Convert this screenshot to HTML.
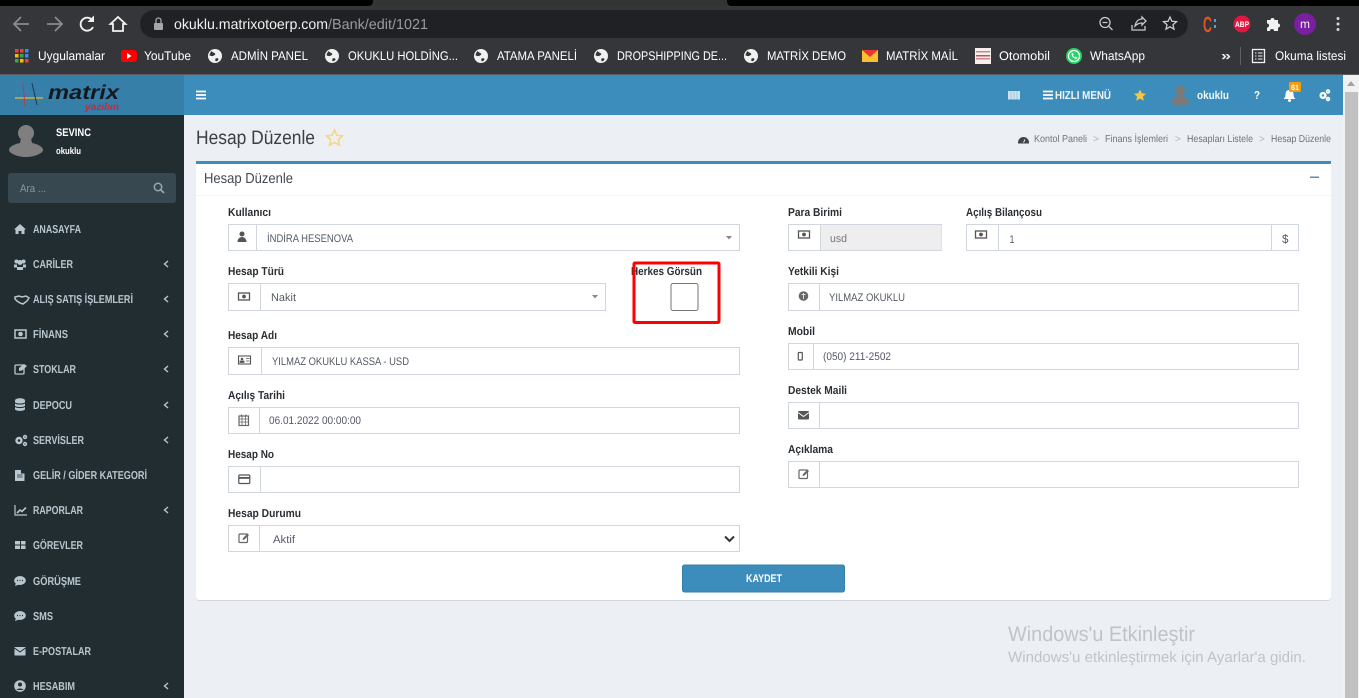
<!DOCTYPE html>
<html lang="tr"><head><meta charset="utf-8"><title>Hesap Düzenle</title>
<style>
html,body{margin:0;padding:0;width:1359px;height:698px;overflow:hidden;background:#ecf0f5}
svg{display:block}
text{font-family:"Liberation Sans",sans-serif;white-space:pre}
.b{fill:#fff;font-size:12.500px}
.m{fill:#b8c7ce;font-size:11.500px;font-weight:bold}
.l{fill:#2a2f33;font-size:11.500px;font-weight:bold}
.v{fill:#555a66;font-size:11px}
.c{fill:#6f7378;font-size:10px}
.box{fill:#fff;stroke:#d2d6de;stroke-width:1}
.dv{stroke:#d2d6de;stroke-width:1}
.ic{fill:#555}
.mi{fill:#b8c7ce}
.ch{fill:none;stroke:#b8c7ce;stroke-width:1.4}
</style></head><body>
<svg width="1359" height="698" viewBox="0 0 1359 698" xmlns="http://www.w3.org/2000/svg" text-rendering="geometricPrecision">
<!-- chrome -->
<rect width="1359" height="75" fill="#35363a"/>
<rect y="0" width="1359" height="6" fill="#333"/>
<path d="M0 0H373V1Q373 6 368 6H0Z" fill="#000"/>
<path d="M727 0H1359V6H732Q727 6 727 1Z" fill="#000"/>
<rect y="74" width="1359" height="1" fill="#5a5b5e"/>
<g fill="none" stroke="#8a8b8e" stroke-width="1.800"><path d="M29 24H15M21 17l-7 7 7 7"/></g>
<g fill="none" stroke="#8a8b8e" stroke-width="1.800"><path d="M47 24H61M55 17l7 7-7 7"/></g>
<path d="M92.500 20.500A6.500 6.500 0 1 0 93 27" fill="none" stroke="#f1f1f1" stroke-width="1.900"/><path d="M94 15.500V22H87.500Z" fill="#f1f1f1"/>
<path d="M118 17l-7.500 7H113V31H123V24H125.500Z" fill="none" stroke="#f1f1f1" stroke-width="1.800"/>
<rect x="140" y="10" width="1048" height="28" rx="14" fill="#202124"/>
<rect x="154" y="23" width="9" height="7" rx="1" fill="#a5a6a9"/><path d="M156 23v-2.500a2.500 2.500 0 0 1 5 0V23" fill="none" stroke="#a5a6a9" stroke-width="1.300"/>
<text x="174" y="29" font-size="14.500" fill="#f1f1f1" textLength="154" lengthAdjust="spacingAndGlyphs">okuklu.matrixotoerp.com</text>
<text x="328" y="29" font-size="14.500" fill="#9a9b9e" textLength="100" lengthAdjust="spacingAndGlyphs">/Bank/edit/1021</text>
<g fill="none" stroke="#c8c9cb" stroke-width="1.300"><circle cx="1105" cy="22.500" r="5"/><path d="M1109 26.500l3.500 3.500M1102.500 22.500h5"/>
<path d="M1132 25v5h13v-4M1135 26c1-5 4-7 7-7v-2l4 4-4 4v-2c-3 0-5 1-7 3Z"/>
<path d="M1170 17l1.900 4.300 4.600.4-3.500 3 1 4.500-4-2.400-4 2.400 1-4.500-3.500-3 4.600-.4Z"/></g>
<text x="1203" y="32" font-size="22" font-weight="bold" fill="#e8501f" textLength="9" lengthAdjust="spacingAndGlyphs">C</text>
<rect x="1214" y="19" width="2" height="3" fill="#4aa3df"/><rect x="1214" y="25" width="2" height="3" fill="#4aa3df"/>
<circle cx="1242" cy="24" r="8.500" fill="#e2173f"/><text x="1235" y="27" font-size="8" font-weight="bold" fill="#fff" textLength="14" lengthAdjust="spacingAndGlyphs">ABP</text>
<path d="M1267 20h3.500a2 2 0 0 1 4 0h3.500v3.500a2 2 0 0 1 0 4V31h-4a2 2 0 0 0-4 0h-3v-3.500a2 2 0 0 0 0-4Z" fill="#f1f1f1"/>
<circle cx="1305" cy="24" r="11" fill="#7b1fa2"/><text x="1300" y="28" font-size="12" fill="#f1f1f1" textLength="10" lengthAdjust="spacingAndGlyphs">m</text>
<g fill="#d8d8da"><circle cx="1338" cy="18.500" r="1.500"/><circle cx="1338" cy="24" r="1.500"/><circle cx="1338" cy="29.500" r="1.500"/></g>
<!-- bookmarks -->
<g><rect x="15" y="49" width="3.500" height="3.500" fill="#ea4335"/><rect x="20" y="49" width="3.500" height="3.500" fill="#ea4335"/><rect x="25" y="49" width="3.500" height="3.500" fill="#4285f4"/><rect x="15" y="54" width="3.500" height="3.500" fill="#fbbc05"/><rect x="20" y="54" width="3.500" height="3.500" fill="#34a853"/><rect x="25" y="54" width="3.500" height="3.500" fill="#4285f4"/><rect x="15" y="59" width="3.500" height="3.500" fill="#34a853"/><rect x="20" y="59" width="3.500" height="3.500" fill="#fbbc05"/><rect x="25" y="59" width="3.500" height="3.500" fill="#ea4335"/></g>
<text class="b" x="38" y="60" textLength="67" lengthAdjust="spacingAndGlyphs">Uygulamalar</text>
<rect x="121" y="50" width="16" height="12" rx="3" fill="#f00"/><path d="M127 53v6l4.500-3Z" fill="#fff"/>
<text class="b" x="144" y="60" textLength="47" lengthAdjust="spacingAndGlyphs">YouTube</text>
<g id="glb"><circle cx="215" cy="56" r="7" fill="#f1f1f1"/><path d="M211.500 51c1 1.500 2.500 1.500 3.500 2.500s-1 2-2 2.500-2.500-.5-3.500-.5c.3-1.800 1-3.300 2-4.500ZM215.500 58.500c1.500-.8 3-.2 3 .8s-1.500 2-2.500 2-.7-2.200-.5-2.800Z" fill="#35363a"/></g>
<text class="b" x="231" y="60" textLength="77" lengthAdjust="spacingAndGlyphs">ADMİN PANEL</text>
<use href="#glb" x="117"/><text class="b" x="348" y="60" textLength="110" lengthAdjust="spacingAndGlyphs">OKUKLU HOLDİNG...</text>
<use href="#glb" x="266"/><text class="b" x="497" y="60" textLength="80" lengthAdjust="spacingAndGlyphs">ATAMA PANELİ</text>
<use href="#glb" x="386"/><text class="b" x="617" y="60" textLength="110" lengthAdjust="spacingAndGlyphs">DROPSHIPPING DE...</text>
<use href="#glb" x="536"/><text class="b" x="767" y="60" textLength="79" lengthAdjust="spacingAndGlyphs">MATRİX DEMO</text>
<path d="M862 50h16v12h-16Z" fill="#fbc02d"/><path d="M862 50l8 7 8-7Z" fill="#e53935"/>
<text class="b" x="886" y="60" textLength="72" lengthAdjust="spacingAndGlyphs">MATRİX MAİL</text>
<rect x="975" y="48" width="16" height="16" fill="#f5f0ee"/><rect x="976" y="51" width="14" height="1.500" fill="#c88"/><rect x="976" y="55" width="14" height="1.500" fill="#b55"/><rect x="976" y="58" width="14" height="1.500" fill="#c88"/>
<text class="b" x="999" y="60" textLength="51" lengthAdjust="spacingAndGlyphs">Otomobil</text>
<circle cx="1074" cy="56" r="8" fill="#25d366"/><circle cx="1074" cy="56" r="5.500" fill="none" stroke="#fff" stroke-width="1.200"/><path d="M1071.500 53.500c0 3 2 5 5 5.500l1-1.500-2-1-.8.7-1.700-1.700.7-.8-1-2Z" fill="#fff"/>
<text class="b" x="1090" y="60" textLength="55" lengthAdjust="spacingAndGlyphs">WhatsApp</text>
<text x="1221" y="60" font-size="13" font-weight="bold" fill="#e8e8e8" textLength="10" lengthAdjust="spacingAndGlyphs">»</text>
<rect x="1240" y="47" width="1" height="18" fill="#5f6063"/>
<rect x="1252.500" y="49.500" width="12" height="13" fill="none" stroke="#f1f1f1" stroke-width="1.300"/><path d="M1255 53h1.500M1258 53h4.500M1255 56h1.500M1258 56h4.500M1255 59h1.500M1258 59h4.500" stroke="#f1f1f1"/>
<text class="b" x="1275" y="60" textLength="71" lengthAdjust="spacingAndGlyphs">Okuma listesi</text>

<!-- header -->
<rect y="75" width="1343" height="40" fill="#3c8dbc"/>
<rect y="75" width="184" height="40" fill="#367fa9"/>
<!-- logo -->
<path d="M16 92H43" stroke="#3b7fc0" stroke-width="1.200"/><path d="M15 98H43" stroke="#c9b24a" stroke-width="1.500"/><path d="M23 84L25 106" stroke="#c23a3a" stroke-width="1"/><path d="M32 83L37 105" stroke="#1d3a55" stroke-width="1"/>
<text x="48" y="99" font-size="20" font-weight="bold" font-style="italic" fill="#14191f" textLength="71" lengthAdjust="spacingAndGlyphs">matrix</text>
<text x="85" y="110" font-size="10" font-weight="bold" font-style="italic" fill="#c8283a" textLength="34" lengthAdjust="spacingAndGlyphs">yazılım</text>
<path d="M196 91.500h10M196 95h10M196 98.500h10" stroke="#fff" stroke-width="1.700"/>
<g fill="#cfe3f0"><rect x="1008" y="91" width="12" height="8.500"/></g><path d="M1011 91v8.500M1014 91v8.500M1017 91v8.500" stroke="#8dbcd9" stroke-width=".7"/>
<path d="M1043 91.500h10M1043 95h10M1043 98.500h10" stroke="#fff" stroke-width="1.700"/>
<text x="1055" y="99" font-size="11.500" font-weight="bold" fill="#f2f6f9" textLength="56" lengthAdjust="spacingAndGlyphs">HIZLI MENÜ</text>
<path d="M1140 89.500l1.800 3.800 4.200.5-3.100 2.800.9 4.100-3.800-2.100-3.800 2.100.9-4.100-3.100-2.800 4.200-.5Z" fill="#f6c544"/>
<circle cx="1180" cy="90.500" r="5" fill="#7a7a7a"/><path d="M1177 94h6l1 3c3 1 5 3 5 5 0 2-4 3.500-9 3.500s-9-1.500-9-3.500c0-2 2-4 5-5Z" fill="#7a7a7a"/>
<text x="1197" y="99" font-size="11.500" font-weight="bold" fill="#f2f6f9" textLength="32" lengthAdjust="spacingAndGlyphs">okuklu</text>
<text x="1254" y="99" font-size="11.500" font-weight="bold" fill="#fff" textLength="6" lengthAdjust="spacingAndGlyphs">?</text>
<path d="M1289.500 90c3 0 4 2 4 4.500 0 2.500 1 3.500 2 4.500h-12c1-1 2-2 2-4.500 0-2.500 1-4.500 4-4.500Z" fill="#fff"/><circle cx="1289.500" cy="100.500" r="1.500" fill="#fff"/>
<rect x="1289" y="82" width="12" height="10" rx="1.500" fill="#f39c12"/><text x="1291" y="90" font-size="7.500" font-weight="bold" fill="#fff" textLength="8" lengthAdjust="spacingAndGlyphs">61</text>
<g id="gears" fill="none" stroke="#fff"><circle cx="1323" cy="95.500" r="2.400" stroke-width="2.400"/><circle cx="1328" cy="91.500" r="1.400" stroke-width="1.700"/><circle cx="1328" cy="99" r="1.400" stroke-width="1.700"/></g>
<!-- scrollbar -->
<rect x="1343" y="75" width="16" height="623" fill="#f1f1f1"/>
<path d="M1351 81l-4 5h8Z" fill="#a3a3a3"/>
<rect x="1345" y="92" width="13" height="606" fill="#c1c1c1"/>

<!-- sidebar -->
<rect y="115" width="184" height="583" fill="#222d32"/>
<circle cx="26" cy="133" r="8" fill="#7f7f7f"/><path d="M21 138h10l1 5c6 1 11 4 11 7 0 3-8 7-17 7s-17-4-17-7c0-3 5-6 11-7Z" fill="#7f7f7f"/>
<text x="56" y="136" font-size="11" font-weight="bold" fill="#fff" textLength="35" lengthAdjust="spacingAndGlyphs">SEVINC</text>
<text x="56" y="154" font-size="9.500" font-weight="bold" fill="#fff" textLength="25" lengthAdjust="spacingAndGlyphs">okuklu</text>
<rect x="8" y="173" width="168" height="30" rx="3" fill="#374850"/>
<text x="20" y="192" font-size="11" fill="#8a9aa2" textLength="26" lengthAdjust="spacingAndGlyphs">Ara ...</text>
<circle cx="158" cy="187" r="3.700" fill="none" stroke="#99a7ae" stroke-width="1.500"/><path d="M161 190l3 3" stroke="#99a7ae" stroke-width="1.800"/>

<text class="m" x="33" y="233" textLength="48" lengthAdjust="spacingAndGlyphs">ANASAYFA</text>
<path class="mi" d="M20 224l6 5.500h-1.500V234h-3v-3h-3v3h-3v-4.500H14Z"/>
<text class="m" x="33" y="268" textLength="40" lengthAdjust="spacingAndGlyphs">CARİLER</text>
<circle cx="16.500" cy="261.500" r="2" class="mi"/><circle cx="23.500" cy="261.500" r="2" class="mi"/><circle cx="20" cy="262.500" r="2.500" class="mi"/><path class="mi" d="M14 264.500h3v2.500h6v-2.500h3v3h-3v2.500h-6v-2.500h-3Z"/>
<path class="ch" d="M168 261l-3.500 3 3.500 3"/>
<text class="m" x="33" y="303" textLength="100" lengthAdjust="spacingAndGlyphs">ALIŞ SATIŞ İŞLEMLERİ</text>
<path d="M15 297l4-1 3 1 4-1 3 2-2 3-4 3-3-1-3-2-2-2Z" fill="none" stroke="#b8c7ce" stroke-width="1.500"/>
<path class="ch" d="M168 296l-3.500 3 3.500 3"/>
<text class="m" x="33" y="338" textLength="35" lengthAdjust="spacingAndGlyphs">FİNANS</text>
<rect x="15" y="330" width="11" height="8" fill="none" stroke="#b8c7ce" stroke-width="1.500"/><circle cx="20.500" cy="334" r="2.300" class="mi"/>
<path class="ch" d="M168 331l-3.500 3 3.500 3"/>
<text class="m" x="33" y="373" textLength="43" lengthAdjust="spacingAndGlyphs">STOKLAR</text>
<rect x="15" y="365" width="9" height="9" rx="1" fill="none" stroke="#b8c7ce" stroke-width="1.300"/><path class="mi" d="M19 368l5-4 3 2-5 4.500-3 .5Z"/>
<path class="ch" d="M168 366l-3.500 3 3.500 3"/>
<text class="m" x="33" y="409" textLength="39" lengthAdjust="spacingAndGlyphs">DEPOCU</text>
<path class="mi" d="M15 400.500c0-3 10-3 10 0v1.500c0 2-10 2-10 0Zm0 3c2 1.500 8 1.500 10 0v2c0 2-10 2-10 0Zm0 3.500c2 1.500 8 1.500 10 0v2c0 2.500-10 2.500-10 0Z"/>
<path class="ch" d="M168 402l-3.500 3 3.500 3"/>
<text class="m" x="33" y="444" textLength="51" lengthAdjust="spacingAndGlyphs">SERVİSLER</text>
<g fill="none" stroke="#b8c7ce"><circle cx="19" cy="440.500" r="2.500" stroke-width="2.400"/><circle cx="25" cy="437" r="1.400" stroke-width="1.600"/><circle cx="25" cy="444" r="1.400" stroke-width="1.600"/></g>
<path class="ch" d="M168 437l-3.500 3 3.500 3"/>
<text class="m" x="33" y="479" textLength="114" lengthAdjust="spacingAndGlyphs">GELİR / GİDER KATEGORİ</text>
<path class="mi" d="M15 470h6v3.500h3.500V481H15Z"/><path d="M17 475h5.500M17 477h5.500" stroke="#222d32" stroke-width=".8"/>
<text class="m" x="33" y="514" textLength="50" lengthAdjust="spacingAndGlyphs">RAPORLAR</text>
<path d="M15 505v10h12" fill="none" stroke="#b8c7ce" stroke-width="1.200"/><path d="M17 513l3-3 2 1.500 4-4" fill="none" stroke="#b8c7ce" stroke-width="1.600"/>
<path class="ch" d="M168 507l-3.500 3 3.500 3"/>
<text class="m" x="33" y="549" textLength="50" lengthAdjust="spacingAndGlyphs">GÖREVLER</text>
<path class="mi" d="M15 541h5v3.500h-5Zm6 0h4.500v3.500H21Zm-6 4.500h5v3.500h-5Zm6 0h4.500v3.500H21Z"/>
<text class="m" x="33" y="585" textLength="48" lengthAdjust="spacingAndGlyphs">GÖRÜŞME</text>
<g id="cht"><ellipse cx="20" cy="580.500" rx="5.800" ry="4.500" class="mi"/><path class="mi" d="M16 583l-1 3 4-1.500Z"/><path d="M17 580.500h1M19.500 580.500h1M22 580.500h1" stroke="#222d32" stroke-width="1.200"/></g>
<text class="m" x="33" y="620" textLength="20" lengthAdjust="spacingAndGlyphs">SMS</text>
<use href="#cht" y="35"/>
<text class="m" x="33" y="655" textLength="58" lengthAdjust="spacingAndGlyphs">E-POSTALAR</text>
<rect x="14.500" y="647" width="11" height="8.500" class="mi"/><path d="M14.500 648l5.500 4 5.500-4" fill="none" stroke="#222d32"/>
<text class="m" x="33" y="690" textLength="42" lengthAdjust="spacingAndGlyphs">HESABIM</text>
<circle cx="20" cy="686" r="5.800" class="mi"/><circle cx="20" cy="684.500" r="2" fill="#222d32"/><path d="M16.500 690c1-2 6-2 7 0Z" fill="#222d32"/>
<path class="ch" d="M168 683l-3.500 3 3.500 3"/>

<!-- page title -->
<text x="196" y="144" font-size="19.500" fill="#3a3f44" textLength="119" lengthAdjust="spacingAndGlyphs">Hesap Düzenle</text>
<path d="M334.500 130l2.400 5.300 5.600.6-4.200 3.800 1.200 5.600-5-2.900-5 2.900 1.200-5.600-4.200-3.800 5.600-.6Z" fill="none" stroke="#f5d67e" stroke-width="1.500"/>
<path d="M1018 142.500a5.500 5.500 0 0 1 11 0v1h-11Z" fill="#444"/><path d="M1023.500 142.500l1.500-3" stroke="#ecf0f5"/>
<text class="c" x="1034" y="142" textLength="53" lengthAdjust="spacingAndGlyphs">Kontol Paneli</text>
<text class="c" x="1093" y="142" style="fill:#b0b3b6" textLength="5">&gt;</text>
<text class="c" x="1105" y="142" textLength="63" lengthAdjust="spacingAndGlyphs">Finans İşlemleri</text>
<text class="c" x="1175" y="142" style="fill:#b0b3b6" textLength="5">&gt;</text>
<text class="c" x="1187" y="142" textLength="66" lengthAdjust="spacingAndGlyphs">Hesapları Listele</text>
<text class="c" x="1259" y="142" style="fill:#b0b3b6" textLength="5">&gt;</text>
<text class="c" x="1271" y="142" textLength="60" lengthAdjust="spacingAndGlyphs">Hesap Düzenle</text>

<!-- card -->
<rect x="196" y="162" width="1135" height="439" rx="3" fill="#d2d6de"/>
<rect x="196" y="161" width="1135" height="439" rx="3" fill="#fff"/>
<path d="M196 164q0-3 3-3H1328q3 0 3 3" fill="#3c8dbc" /><rect x="196" y="161" width="1135" height="2" fill="#3c8dbc"/>
<rect x="196" y="195" width="1135" height="1" fill="#f4f4f4"/>
<text x="204" y="183" font-size="14.500" fill="#444a50" textLength="89" lengthAdjust="spacingAndGlyphs">Hesap Düzenle</text>
<rect x="1310" y="176.500" width="9" height="1.500" fill="#5a8fb5"/>

<!-- left column -->
<text class="l" x="228" y="216" textLength="43" lengthAdjust="spacingAndGlyphs">Kullanıcı</text>
<rect class="box" x="228.500" y="224.500" width="511" height="26"/><path class="dv" d="M256.500 225v25"/>
<circle cx="242" cy="234" r="2.500" class="ic"/><path class="ic" d="M237.500 242c0-3 2-5 4.500-5s4.500 2 4.500 5Z"/>
<text class="v" x="267" y="242" textLength="86" lengthAdjust="spacingAndGlyphs">İNDİRA HESENOVA</text>
<path d="M726 236h6l-3 3.500Z" fill="#888"/>

<text class="l" x="228" y="275" textLength="56" lengthAdjust="spacingAndGlyphs">Hesap Türü</text>
<rect class="box" x="228.500" y="283.500" width="377" height="27"/><path class="dv" d="M260.500 284v26"/>
<g id="mn"><rect x="238.500" y="293" width="11" height="7" fill="none" stroke="#555" stroke-width="1.300"/><circle cx="244" cy="296.500" r="1.900" class="ic"/></g>
<text class="v" x="271" y="301" textLength="25" lengthAdjust="spacingAndGlyphs">Nakit</text>
<path d="M592 295h6l-3 3.500Z" fill="#888"/>

<text class="l" x="631" y="275" textLength="71" lengthAdjust="spacingAndGlyphs">Herkes Görsün</text>
<rect x="671" y="283.500" width="27" height="27" rx="2" fill="#fff" stroke="#767676"/>
<rect x="634" y="263" width="85" height="59.500" rx="1" fill="none" stroke="#f00" stroke-width="3"/>

<text class="l" x="228" y="339" textLength="49" lengthAdjust="spacingAndGlyphs">Hesap Adı</text>
<rect class="box" x="228.500" y="347.500" width="511" height="27"/><path class="dv" d="M261.500 348v26"/>
<rect x="238.500" y="356" width="12" height="8" fill="none" stroke="#555" stroke-width="1.100"/><circle cx="242" cy="359" r="1.300" class="ic"/><path d="M240 362.500h4v-1.500h-4ZM246 358.500h3.500M246 361h3.500" stroke="#555" stroke-width=".8" fill="#555"/>
<text class="v" x="272" y="365" textLength="137" lengthAdjust="spacingAndGlyphs">YILMAZ OKUKLU KASSA - USD</text>

<text class="l" x="228" y="399" textLength="57" lengthAdjust="spacingAndGlyphs">Açılış Tarihi</text>
<rect class="box" x="228.500" y="407.500" width="511" height="26"/><path class="dv" d="M259.500 408v25"/>
<rect x="239" y="416" width="9.500" height="9.500" fill="none" stroke="#666" stroke-width="1.200"/><path d="M239 419h9.500M242 416v9.500M245.500 416v9.500M239 422h9.500" stroke="#666" stroke-width=".8"/><path d="M241.500 414.500v2M246 414.500v2" stroke="#666" stroke-width="1.200"/>
<text class="v" x="269" y="424" textLength="92" lengthAdjust="spacingAndGlyphs">06.01.2022 00:00:00</text>

<text class="l" x="228" y="458" textLength="46" lengthAdjust="spacingAndGlyphs">Hesap No</text>
<rect class="box" x="228.500" y="466.500" width="511" height="26"/><path class="dv" d="M260.500 467v25"/>
<rect x="238.800" y="475" width="11" height="8.500" rx="1" fill="none" stroke="#555" stroke-width="1.200"/><rect x="239" y="477" width="10.500" height="1.800" fill="#555"/>

<text class="l" x="228" y="517" textLength="73" lengthAdjust="spacingAndGlyphs">Hesap Durumu</text>
<rect class="box" x="228.500" y="525.500" width="511" height="26"/><path class="dv" d="M259.500 526v25"/>
<rect x="239" y="534" width="8.500" height="8.500" rx="1" fill="none" stroke="#666" stroke-width="1.200"/><path d="M243 538l4.500-4.500 1.500 1.500-4.500 4.500-2 .5Z" fill="#666"/>
<text class="v" x="273" y="543" textLength="22" lengthAdjust="spacingAndGlyphs">Aktif</text>
<path d="M725 536.500l4.500 4.500 4.500-4.500" fill="none" stroke="#333" stroke-width="2"/>

<rect x="682.500" y="565" width="162" height="27" rx="2" fill="#3c8dbc" stroke="#367fa9"/>
<text x="746" y="582" font-size="11" font-weight="bold" fill="#fff" textLength="36" lengthAdjust="spacingAndGlyphs">KAYDET</text>

<!-- right column -->
<text class="l" x="788" y="216" textLength="54" lengthAdjust="spacingAndGlyphs">Para Birimi</text>
<rect class="box" x="788.500" y="224.500" width="153" height="26"/><rect x="820.500" y="225" width="121" height="25" fill="#eee"/><path class="dv" d="M820.500 225v25"/>
<use href="#mn" x="560" y="-62"/>
<text x="830" y="242" font-size="11" fill="#777" textLength="17" lengthAdjust="spacingAndGlyphs">usd</text>

<text class="l" x="966" y="216" textLength="76" lengthAdjust="spacingAndGlyphs">Açılış Bilançosu</text>
<rect class="box" x="966.500" y="224.500" width="332" height="26"/><path class="dv" d="M998.500 225v25M1271.500 225v25"/>
<use href="#mn" x="737" y="-62"/>
<text class="v" x="1009.500" y="243" textLength="5" lengthAdjust="spacingAndGlyphs">1</text>
<text x="1282" y="243" font-size="12" fill="#555" textLength="6.500" lengthAdjust="spacingAndGlyphs">$</text>

<text class="l" x="788" y="275" textLength="51" lengthAdjust="spacingAndGlyphs">Yetkili Kişi</text>
<rect class="box" x="788.500" y="283.500" width="510" height="27"/><path class="dv" d="M819.500 284v26"/>
<circle cx="803.500" cy="296" r="4.800" fill="#666"/><path d="M803.500 293v6M801.500 294.500h4" stroke="#ddd"/>
<text class="v" x="829" y="301" textLength="76" lengthAdjust="spacingAndGlyphs">YILMAZ OKUKLU</text>

<text class="l" x="788" y="335" textLength="27" lengthAdjust="spacingAndGlyphs">Mobil</text>
<rect class="box" x="788.500" y="343.500" width="510" height="26"/><path class="dv" d="M813.500 344v25"/>
<rect x="798.300" y="352.500" width="4" height="7.500" rx=".7" fill="none" stroke="#555" stroke-width="1.200"/>
<text class="v" x="823" y="360" textLength="68" lengthAdjust="spacingAndGlyphs">(050) 211-2502</text>

<text class="l" x="788" y="394" textLength="59" lengthAdjust="spacingAndGlyphs">Destek Maili</text>
<rect class="box" x="788.500" y="402.500" width="510" height="26"/><path class="dv" d="M819.500 403v25"/>
<rect x="798" y="411" width="11" height="8.500" rx="1" class="ic"/><path d="M798 412.500l5.500 4 5.500-4" fill="none" stroke="#fff"/>

<text class="l" x="788" y="453" textLength="45" lengthAdjust="spacingAndGlyphs">Açıklama</text>
<rect class="box" x="788.500" y="461.500" width="510" height="26"/><path class="dv" d="M819.500 462v25"/>
<rect x="799" y="470" width="8.500" height="8.500" rx="1" fill="none" stroke="#666" stroke-width="1.200"/><path d="M803 474l4.500-4.500 1.500 1.500-4.500 4.500-2 .5Z" fill="#666"/>

<!-- windows watermark -->
<text x="1008" y="641" font-size="21" fill="#c0c3c7" textLength="187" lengthAdjust="spacingAndGlyphs">Windows'u Etkinleştir</text>
<text x="1008" y="662" font-size="15" fill="#c0c3c7" textLength="298" lengthAdjust="spacingAndGlyphs">Windows'u etkinleştirmek için Ayarlar'a gidin.</text>
</svg>
</body></html>
